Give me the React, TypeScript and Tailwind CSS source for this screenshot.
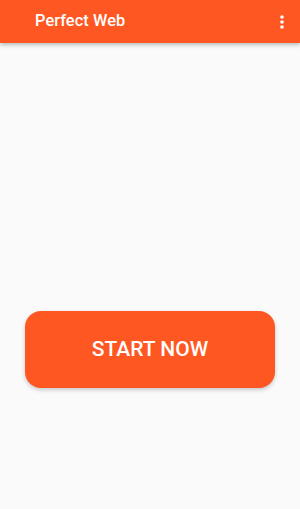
export default function App() {
  return (
    <div className="flex flex-col w-[300px] h-[509px] bg-[#fafafa] font-['Roboto',sans-serif]">
      <header className="flex items-center h-[43px] bg-[#ff5722] shadow-[0_2px_4px_rgba(0,0,0,0.25)] pl-[35px] pr-[14px] z-10">
        <span className="flex-1 text-white text-[16.3px] font-medium tracking-[0.1px]">Perfect Web</span>
        <svg width="4" height="14" viewBox="0 0 4 14" className="mr-[2px]">
          <circle cx="2" cy="2" r="1.8" fill="#fff" />
          <circle cx="2" cy="7" r="1.8" fill="#fff" />
          <circle cx="2" cy="12" r="1.8" fill="#fff" />
        </svg>
      </header>
      <main className="flex-1 flex flex-col items-center pt-[268px]">
        <button className="w-[250px] h-[77px] rounded-[16px] bg-[#ff5722] text-white text-[21px] font-medium shadow-[0_2px_4px_rgba(0,0,0,0.2)]">
          START NOW
        </button>
      </main>
    </div>
  )
}
